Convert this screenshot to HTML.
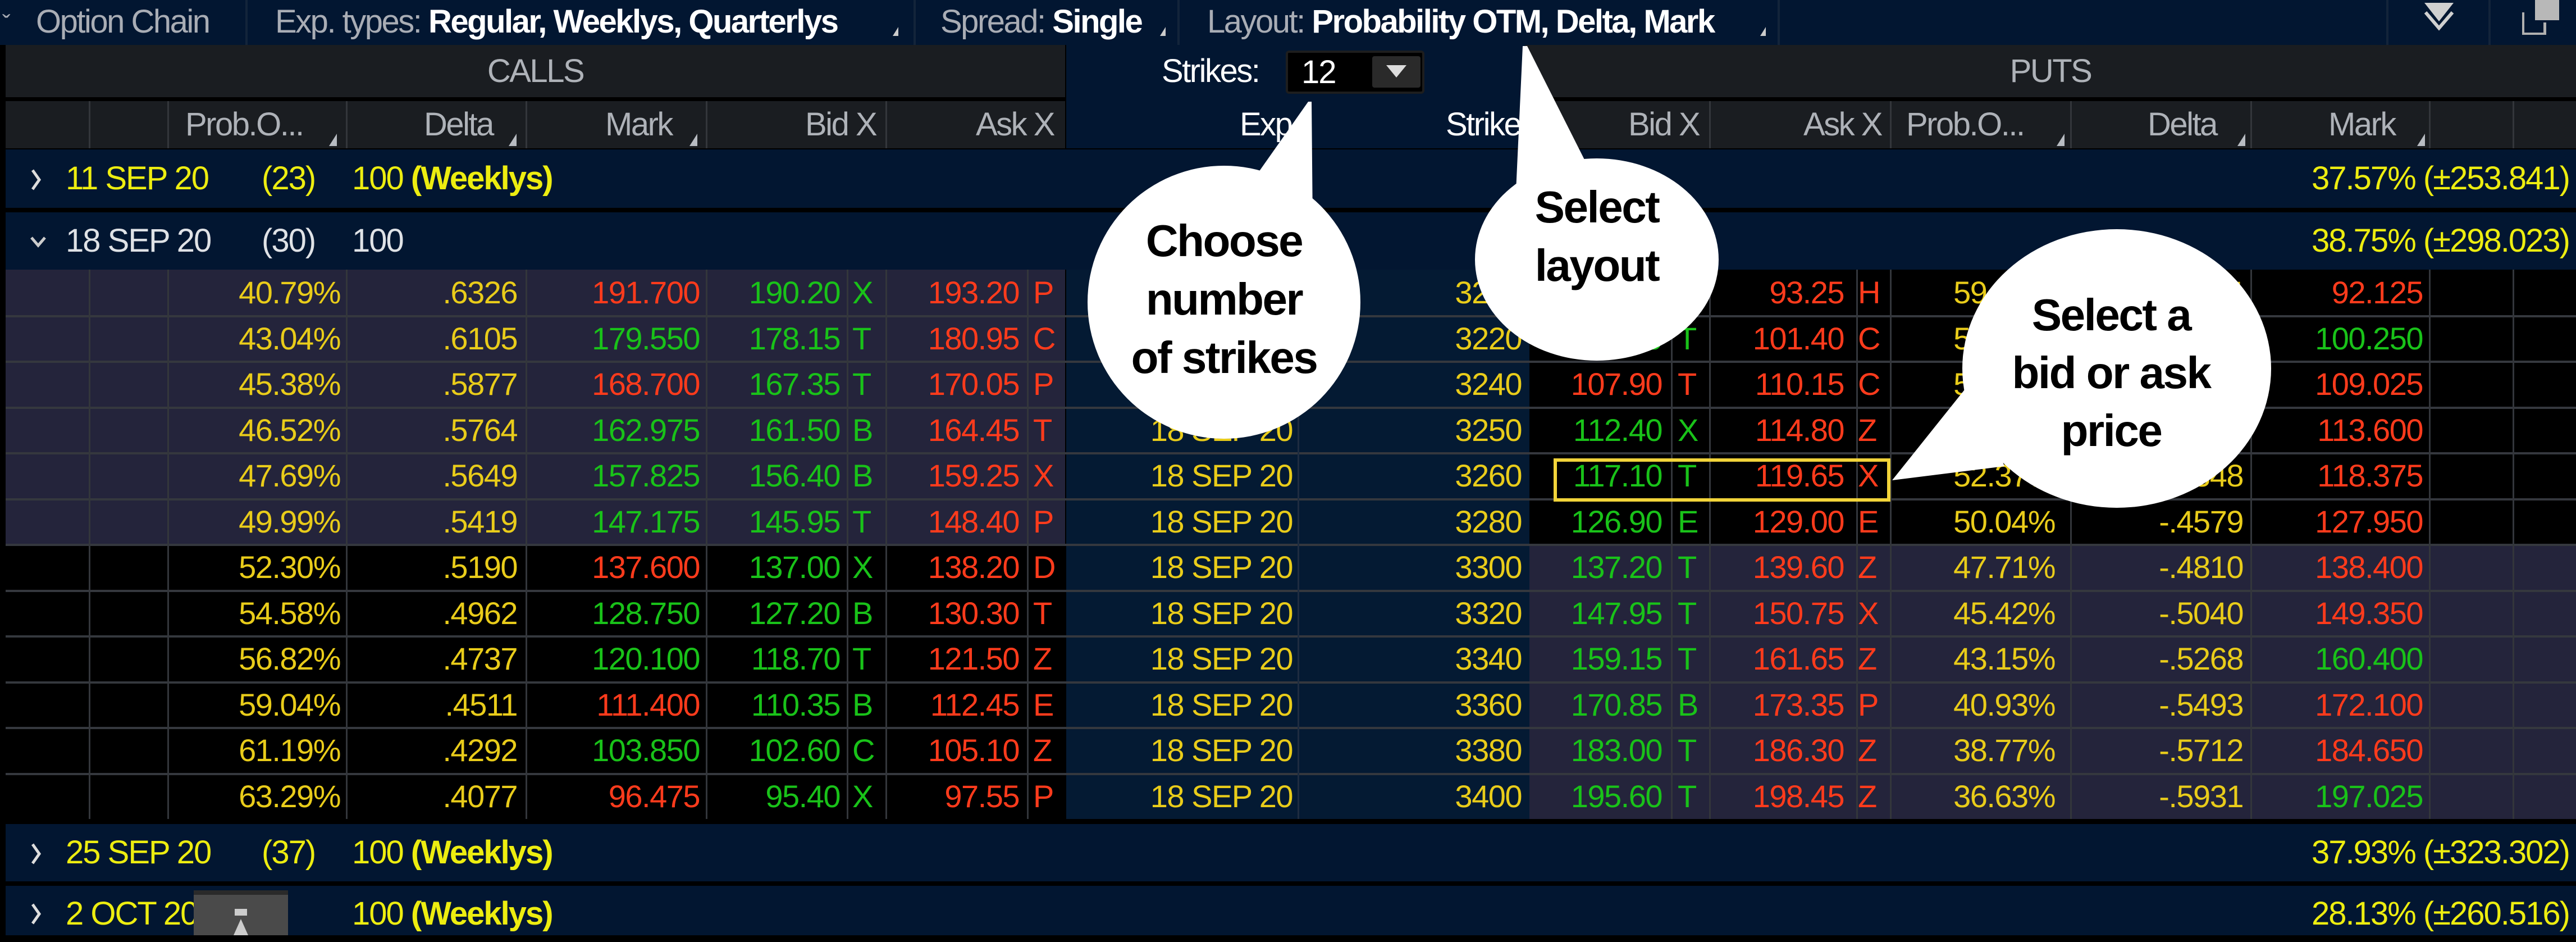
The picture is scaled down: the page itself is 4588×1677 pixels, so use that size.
<!DOCTYPE html>
<html><head><meta charset="utf-8"><style>
*{margin:0;padding:0;box-sizing:border-box}
body{width:4588px;height:1665px;background:#000;position:relative;overflow:hidden;font-family:"Liberation Sans",Arial,sans-serif}
.a{position:absolute}
.tb{left:0;top:0;width:4588px;height:80px;background:#021631}
.tt{position:absolute;top:4px;font-size:58px;line-height:70px;color:#a9adb5;white-space:nowrap;letter-spacing:-2.5px}
.tt b{color:#fff}
.sep{position:absolute;top:0;width:4px;height:80px;background:#13243a}
.hdr{background:#1a1d21;color:#aeb2b8;font-size:58px;letter-spacing:-2.5px}
.hl{position:absolute;top:0;height:84px;line-height:84px;white-space:nowrap}
.vl{position:absolute;width:3px;background:#33363b}
.exp{position:absolute;left:10px;width:4578px;background:#021631}
.ex{position:absolute;font-size:58px;letter-spacing:-2px;color:#eded10;white-space:nowrap}
.row{position:absolute;left:10px;width:4578px;height:81px;font-size:56px;letter-spacing:-1.5px;line-height:81px}
.row span{position:absolute;top:0;white-space:nowrap}
.r{text-align:right}
.y{color:#e9cc1a}.rd{color:#ff3b1c}.g{color:#19c219}.w{color:#fff}
.tri{position:absolute;width:0;height:0;border-left:14px solid transparent;border-bottom:22px solid #b8bcc2}
</style></head><body>
<!-- toolbar -->
<div class="a tb"></div>
<div class="tt" style="left:4px;font-size:44px;top:8px">&#711;</div>
<div class="tt" style="left:64px">Option Chain</div>
<div class="sep" style="left:437px"></div>
<div class="tt" style="left:490px">Exp. types: <b>Regular, Weeklys, Quarterlys</b></div>
<div class="tri" style="left:1590px;top:48px;border-bottom-color:#ccc;border-left-width:10px;border-bottom-width:16px"></div>
<div class="sep" style="left:1627px"></div>
<div class="tt" style="left:1675px">Spread: <b>Single</b></div>
<div class="tri" style="left:2066px;top:48px;border-bottom-color:#ccc;border-left-width:10px;border-bottom-width:16px"></div>
<div class="sep" style="left:2097px"></div>
<div class="tt" style="left:2150px">Layout: <b>Probability OTM, Delta, Mark</b></div>
<div class="tri" style="left:3135px;top:48px;border-bottom-color:#ccc;border-left-width:10px;border-bottom-width:16px"></div>
<div class="sep" style="left:3166px"></div>
<div class="sep" style="left:4250px"></div>
<div class="sep" style="left:4432px"></div>
<svg class="a" style="left:4310px;top:0" width="70" height="60"><polygon points="8,5 60,5 34,38" fill="#d0d0d0"/><polyline points="10,22 34,50 58,22" fill="none" stroke="#d0d0d0" stroke-width="6"/></svg>
<div class="a" style="left:4515px;top:0;width:43px;height:36px;background:#b8b8b8"></div>
<div class="a" style="left:4492px;top:22px;width:43px;height:40px;border:4px solid #b0b0b0;border-top:none;border-right:none"></div>
<div class="a" style="left:4530px;top:40px;width:5px;height:22px;background:#b0b0b0"></div>

<!-- CALLS / PUTS header -->
<div class="a hdr" style="left:10px;top:80px;width:1887px;height:93px;text-align:center;line-height:93px">CALLS</div>
<div class="a" style="left:1899px;top:80px;width:817px;height:184px;background:#021631"></div>
<div class="a hdr" style="left:2716px;top:80px;width:1872px;height:93px;text-align:center;line-height:93px">PUTS</div>
<div class="a" style="left:2069px;top:92px;font-size:58px;color:#fff;letter-spacing:-2.5px;line-height:70px">Strikes:</div>
<div class="a" style="left:2290px;top:90px;width:247px;height:77px;background:#000;border:4px solid #1e1e1e;border-radius:6px"></div>
<div class="a" style="left:2318px;top:92px;font-size:58px;color:#fff;line-height:74px;letter-spacing:-2px">12</div>
<div class="a" style="left:2444px;top:100px;width:86px;height:56px;background:#2a2a2a;border-radius:4px"></div>
<svg class="a" style="left:2465px;top:112px" width="44" height="30"><polygon points="4,4 40,4 22,26" fill="#ddd"/></svg>

<!-- column headers -->
<div class="a hdr" style="left:10px;top:180px;width:1887px;height:84px">
<span class="hl" style="left:320px">Prob.O...</span>
<span class="hl" style="left:745px">Delta</span>
<span class="hl" style="left:1068px">Mark</span>
<span class="hl" style="left:1424px">Bid X</span>
<span class="hl" style="left:1728px">Ask X</span>
</div>
<div class="tri" style="left:586px;top:238px"></div>
<div class="tri" style="left:906px;top:238px"></div>
<div class="tri" style="left:1228px;top:238px"></div>
<div class="a" style="left:2208px;top:180px;font-size:58px;color:#fff;line-height:84px;letter-spacing:-2.5px">Exp</div>
<div class="a" style="left:2575px;top:180px;font-size:58px;color:#fff;line-height:84px;letter-spacing:-2.5px">Strike</div>
<div class="a hdr" style="left:2716px;top:180px;width:1872px;height:84px">
<span class="hl" style="left:184px">Bid X</span>
<span class="hl" style="left:496px">Ask X</span>
<span class="hl" style="left:679px">Prob.O...</span>
<span class="hl" style="left:1109px">Delta</span>
<span class="hl" style="left:1431px">Mark</span>
</div>
<div class="tri" style="left:3663px;top:238px"></div>
<div class="tri" style="left:3985px;top:238px"></div>
<div class="tri" style="left:4305px;top:238px"></div>
<!-- header grid -->
<div class="vl" style="left:158px;top:180px;height:84px"></div>
<div class="vl" style="left:298px;top:180px;height:84px"></div>
<div class="vl" style="left:616px;top:180px;height:84px"></div>
<div class="vl" style="left:936px;top:180px;height:84px"></div>
<div class="vl" style="left:1257px;top:180px;height:84px"></div>
<div class="vl" style="left:1577px;top:180px;height:84px"></div>
<div class="vl" style="left:3044px;top:180px;height:84px"></div>
<div class="vl" style="left:3366px;top:180px;height:84px"></div>
<div class="vl" style="left:3687px;top:180px;height:84px"></div>
<div class="vl" style="left:4008px;top:180px;height:84px"></div>
<div class="vl" style="left:4326px;top:180px;height:84px"></div>
<div class="vl" style="left:4475px;top:180px;height:84px"></div>

<!-- expiry rows -->
<div class="exp" style="top:266px;height:104px"></div>
<div class="exp" style="top:378px;height:102px"></div>
<div class="exp" style="top:1467px;height:102px"></div>
<div class="exp" style="top:1577px;height:88px"></div>
<svg class="a" style="left:50px;top:295px" width="30" height="50"><polyline points="8,8 20,25 8,42" fill="none" stroke="#ddd" stroke-width="5"/></svg>
<div class="ex" style="left:117px;top:266px;line-height:104px">11 SEP 20</div>
<div class="ex" style="left:466px;top:266px;line-height:104px">(23)</div>
<div class="ex" style="left:627px;top:266px;line-height:104px">100 <b>(Weeklys)</b></div>
<div class="ex" style="right:12px;top:266px;line-height:104px">37.57% (±253.841)</div>
<svg class="a" style="left:50px;top:415px" width="40" height="30"><polyline points="6,8 18,22 30,8" fill="none" stroke="#ccc" stroke-width="5"/></svg>
<div class="ex" style="left:117px;top:378px;line-height:102px;color:#dfe2e6">18 SEP 20</div>
<div class="ex" style="left:466px;top:378px;line-height:102px;color:#dfe2e6">(30)</div>
<div class="ex" style="left:627px;top:378px;line-height:102px;color:#dfe2e6">100</div>
<div class="ex" style="right:12px;top:378px;line-height:102px">38.75% (±298.023)</div>
<svg class="a" style="left:50px;top:1495px" width="30" height="50"><polyline points="8,8 20,25 8,42" fill="none" stroke="#ddd" stroke-width="5"/></svg>
<div class="ex" style="left:117px;top:1467px;line-height:102px">25 SEP 20</div>
<div class="ex" style="left:466px;top:1467px;line-height:102px">(37)</div>
<div class="ex" style="left:627px;top:1467px;line-height:102px">100 <b>(Weeklys)</b></div>
<div class="ex" style="right:12px;top:1467px;line-height:102px">37.93% (±323.302)</div>
<svg class="a" style="left:50px;top:1602px" width="30" height="50"><polyline points="8,8 20,25 8,42" fill="none" stroke="#ddd" stroke-width="5"/></svg>
<div class="ex" style="left:117px;top:1577px;line-height:100px">2 OCT 20 &nbsp;(34)</div>
<div class="ex" style="left:627px;top:1577px;line-height:100px">100 <b>(Weeklys)</b></div>
<div class="ex" style="right:12px;top:1577px;line-height:100px">28.13% (±260.516)</div>
<div class="a" style="left:345px;top:1585px;width:168px;height:80px;background:#4a4a4a;border-top:8px solid #2a2a2a"></div>
<div class="a" style="left:418px;top:1618px;width:22px;height:12px;background:#ccc"></div>
<svg class="a" style="left:414px;top:1636px" width="30" height="30"><polygon points="15,0 28,29 2,29" fill="#ccc"/></svg>

<!-- data rows backgrounds -->
<div class="a" style="left:10px;top:480px;width:1887px;height:489px;background:#24243b"></div>
<div class="a" style="left:1899px;top:480px;width:825px;height:978px;background:#041a33"></div>
<div class="a" style="left:2724px;top:969px;width:1864px;height:489px;background:#24243b"></div>
<!-- row separators -->
<div class="a" style="left:10px;top:561px;width:4578px;height:4px;background:#35383e"></div>
<div class="a" style="left:10px;top:642px;width:4578px;height:4px;background:#35383e"></div>
<div class="a" style="left:10px;top:724px;width:4578px;height:4px;background:#35383e"></div>
<div class="a" style="left:10px;top:805px;width:4578px;height:4px;background:#35383e"></div>
<div class="a" style="left:10px;top:887px;width:4578px;height:4px;background:#35383e"></div>
<div class="a" style="left:10px;top:968px;width:4578px;height:4px;background:#35383e"></div>
<div class="a" style="left:10px;top:1050px;width:4578px;height:4px;background:#35383e"></div>
<div class="a" style="left:10px;top:1131px;width:4578px;height:4px;background:#35383e"></div>
<div class="a" style="left:10px;top:1213px;width:4578px;height:4px;background:#35383e"></div>
<div class="a" style="left:10px;top:1294px;width:4578px;height:4px;background:#35383e"></div>
<div class="a" style="left:10px;top:1376px;width:4578px;height:4px;background:#35383e"></div>
<!-- grid lines -->
<div class="vl" style="left:158px;top:480px;height:978px"></div>
<div class="vl" style="left:298px;top:480px;height:978px"></div>
<div class="vl" style="left:616px;top:480px;height:978px"></div>
<div class="vl" style="left:936px;top:480px;height:978px"></div>
<div class="vl" style="left:1257px;top:480px;height:978px"></div>
<div class="vl" style="left:1508px;top:480px;height:978px"></div>
<div class="vl" style="left:1577px;top:480px;height:978px"></div>
<div class="vl" style="left:1829px;top:480px;height:978px"></div>
<div class="vl" style="left:2311px;top:480px;height:978px;background:#1e2c40"></div>
<div class="vl" style="left:2976px;top:480px;height:978px"></div>
<div class="vl" style="left:3044px;top:480px;height:978px"></div>
<div class="vl" style="left:3306px;top:480px;height:978px"></div>
<div class="vl" style="left:3366px;top:480px;height:978px"></div>
<div class="vl" style="left:3687px;top:480px;height:978px"></div>
<div class="vl" style="left:4008px;top:480px;height:978px"></div>
<div class="vl" style="left:4326px;top:480px;height:978px"></div>
<div class="vl" style="left:4475px;top:480px;height:978px"></div>

<!-- data rows -->
<div class="row" style="top:480px"><span class="r y" style="left:290px;width:306px">40.79%</span><span class="r y" style="left:610px;width:301px">.6326</span><span class="r rd" style="left:930px;width:306px">191.700</span><span class="r g" style="left:1250px;width:236px">190.20</span><span class="g" style="left:1508px">X</span><span class="r rd" style="left:1570px;width:235px">193.20</span><span class="rd" style="left:1830px">P</span><span class="r y" style="left:1890px;width:402px">18 SEP 20</span><span class="r y" style="left:2310px;width:390px">3200</span><span class="r g" style="left:2720px;width:230px">90.95</span><span class="g" style="left:2978px">X</span><span class="r rd" style="left:3040px;width:234px">93.25</span><span class="rd" style="left:3299px">H</span><span class="r y" style="left:3400px;width:250px">59.21%</span><span class="r y" style="left:3700px;width:285px">-.3654</span><span class="r rd" style="left:4010px;width:295px">92.125</span></div>
<div class="row" style="top:562px"><span class="r y" style="left:290px;width:306px">43.04%</span><span class="r y" style="left:610px;width:301px">.6105</span><span class="r g" style="left:930px;width:306px">179.550</span><span class="r g" style="left:1250px;width:236px">178.15</span><span class="g" style="left:1508px">T</span><span class="r rd" style="left:1570px;width:235px">180.95</span><span class="rd" style="left:1830px">C</span><span class="r y" style="left:1890px;width:402px">18 SEP 20</span><span class="r y" style="left:2310px;width:390px">3220</span><span class="r g" style="left:2720px;width:230px">98.80</span><span class="g" style="left:2978px">T</span><span class="r rd" style="left:3040px;width:234px">101.40</span><span class="rd" style="left:3299px">C</span><span class="r y" style="left:3400px;width:250px">57.02%</span><span class="r y" style="left:3700px;width:285px">-.3871</span><span class="r g" style="left:4010px;width:295px">100.250</span></div>
<div class="row" style="top:643px"><span class="r y" style="left:290px;width:306px">45.38%</span><span class="r y" style="left:610px;width:301px">.5877</span><span class="r rd" style="left:930px;width:306px">168.700</span><span class="r g" style="left:1250px;width:236px">167.35</span><span class="g" style="left:1508px">T</span><span class="r rd" style="left:1570px;width:235px">170.05</span><span class="rd" style="left:1830px">P</span><span class="r y" style="left:1890px;width:402px">18 SEP 20</span><span class="r y" style="left:2310px;width:390px">3240</span><span class="r rd" style="left:2720px;width:230px">107.90</span><span class="rd" style="left:2978px">T</span><span class="r rd" style="left:3040px;width:234px">110.15</span><span class="rd" style="left:3299px">C</span><span class="r y" style="left:3400px;width:250px">54.81%</span><span class="r y" style="left:3700px;width:285px">-.4098</span><span class="r rd" style="left:4010px;width:295px">109.025</span></div>
<div class="row" style="top:725px"><span class="r y" style="left:290px;width:306px">46.52%</span><span class="r y" style="left:610px;width:301px">.5764</span><span class="r g" style="left:930px;width:306px">162.975</span><span class="r g" style="left:1250px;width:236px">161.50</span><span class="g" style="left:1508px">B</span><span class="r rd" style="left:1570px;width:235px">164.45</span><span class="rd" style="left:1830px">T</span><span class="r y" style="left:1890px;width:402px">18 SEP 20</span><span class="r y" style="left:2310px;width:390px">3250</span><span class="r g" style="left:2720px;width:230px">112.40</span><span class="g" style="left:2978px">X</span><span class="r rd" style="left:3040px;width:234px">114.80</span><span class="rd" style="left:3299px">Z</span><span class="r y" style="left:3400px;width:250px">53.65%</span><span class="r y" style="left:3700px;width:285px">-.4213</span><span class="r rd" style="left:4010px;width:295px">113.600</span></div>
<div class="row" style="top:806px"><span class="r y" style="left:290px;width:306px">47.69%</span><span class="r y" style="left:610px;width:301px">.5649</span><span class="r g" style="left:930px;width:306px">157.825</span><span class="r g" style="left:1250px;width:236px">156.40</span><span class="g" style="left:1508px">B</span><span class="r rd" style="left:1570px;width:235px">159.25</span><span class="rd" style="left:1830px">X</span><span class="r y" style="left:1890px;width:402px">18 SEP 20</span><span class="r y" style="left:2310px;width:390px">3260</span><span class="r g" style="left:2720px;width:230px">117.10</span><span class="g" style="left:2978px">T</span><span class="r rd" style="left:3040px;width:234px">119.65</span><span class="rd" style="left:3299px">X</span><span class="r y" style="left:3400px;width:250px">52.37%</span><span class="r y" style="left:3700px;width:285px">-.4348</span><span class="r rd" style="left:4010px;width:295px">118.375</span></div>
<div class="row" style="top:888px"><span class="r y" style="left:290px;width:306px">49.99%</span><span class="r y" style="left:610px;width:301px">.5419</span><span class="r g" style="left:930px;width:306px">147.175</span><span class="r g" style="left:1250px;width:236px">145.95</span><span class="g" style="left:1508px">T</span><span class="r rd" style="left:1570px;width:235px">148.40</span><span class="rd" style="left:1830px">P</span><span class="r y" style="left:1890px;width:402px">18 SEP 20</span><span class="r y" style="left:2310px;width:390px">3280</span><span class="r g" style="left:2720px;width:230px">126.90</span><span class="g" style="left:2978px">E</span><span class="r rd" style="left:3040px;width:234px">129.00</span><span class="rd" style="left:3299px">E</span><span class="r y" style="left:3400px;width:250px">50.04%</span><span class="r y" style="left:3700px;width:285px">-.4579</span><span class="r rd" style="left:4010px;width:295px">127.950</span></div>
<div class="row" style="top:969px"><span class="r y" style="left:290px;width:306px">52.30%</span><span class="r y" style="left:610px;width:301px">.5190</span><span class="r rd" style="left:930px;width:306px">137.600</span><span class="r g" style="left:1250px;width:236px">137.00</span><span class="g" style="left:1508px">X</span><span class="r rd" style="left:1570px;width:235px">138.20</span><span class="rd" style="left:1830px">D</span><span class="r y" style="left:1890px;width:402px">18 SEP 20</span><span class="r y" style="left:2310px;width:390px">3300</span><span class="r g" style="left:2720px;width:230px">137.20</span><span class="g" style="left:2978px">T</span><span class="r rd" style="left:3040px;width:234px">139.60</span><span class="rd" style="left:3299px">Z</span><span class="r y" style="left:3400px;width:250px">47.71%</span><span class="r y" style="left:3700px;width:285px">-.4810</span><span class="r rd" style="left:4010px;width:295px">138.400</span></div>
<div class="row" style="top:1051px"><span class="r y" style="left:290px;width:306px">54.58%</span><span class="r y" style="left:610px;width:301px">.4962</span><span class="r g" style="left:930px;width:306px">128.750</span><span class="r g" style="left:1250px;width:236px">127.20</span><span class="g" style="left:1508px">B</span><span class="r rd" style="left:1570px;width:235px">130.30</span><span class="rd" style="left:1830px">T</span><span class="r y" style="left:1890px;width:402px">18 SEP 20</span><span class="r y" style="left:2310px;width:390px">3320</span><span class="r g" style="left:2720px;width:230px">147.95</span><span class="g" style="left:2978px">T</span><span class="r rd" style="left:3040px;width:234px">150.75</span><span class="rd" style="left:3299px">X</span><span class="r y" style="left:3400px;width:250px">45.42%</span><span class="r y" style="left:3700px;width:285px">-.5040</span><span class="r rd" style="left:4010px;width:295px">149.350</span></div>
<div class="row" style="top:1132px"><span class="r y" style="left:290px;width:306px">56.82%</span><span class="r y" style="left:610px;width:301px">.4737</span><span class="r g" style="left:930px;width:306px">120.100</span><span class="r g" style="left:1250px;width:236px">118.70</span><span class="g" style="left:1508px">T</span><span class="r rd" style="left:1570px;width:235px">121.50</span><span class="rd" style="left:1830px">Z</span><span class="r y" style="left:1890px;width:402px">18 SEP 20</span><span class="r y" style="left:2310px;width:390px">3340</span><span class="r g" style="left:2720px;width:230px">159.15</span><span class="g" style="left:2978px">T</span><span class="r rd" style="left:3040px;width:234px">161.65</span><span class="rd" style="left:3299px">Z</span><span class="r y" style="left:3400px;width:250px">43.15%</span><span class="r y" style="left:3700px;width:285px">-.5268</span><span class="r g" style="left:4010px;width:295px">160.400</span></div>
<div class="row" style="top:1214px"><span class="r y" style="left:290px;width:306px">59.04%</span><span class="r y" style="left:610px;width:301px">.4511</span><span class="r rd" style="left:930px;width:306px">111.400</span><span class="r g" style="left:1250px;width:236px">110.35</span><span class="g" style="left:1508px">B</span><span class="r rd" style="left:1570px;width:235px">112.45</span><span class="rd" style="left:1830px">E</span><span class="r y" style="left:1890px;width:402px">18 SEP 20</span><span class="r y" style="left:2310px;width:390px">3360</span><span class="r g" style="left:2720px;width:230px">170.85</span><span class="g" style="left:2978px">B</span><span class="r rd" style="left:3040px;width:234px">173.35</span><span class="rd" style="left:3299px">P</span><span class="r y" style="left:3400px;width:250px">40.93%</span><span class="r y" style="left:3700px;width:285px">-.5493</span><span class="r rd" style="left:4010px;width:295px">172.100</span></div>
<div class="row" style="top:1295px"><span class="r y" style="left:290px;width:306px">61.19%</span><span class="r y" style="left:610px;width:301px">.4292</span><span class="r g" style="left:930px;width:306px">103.850</span><span class="r g" style="left:1250px;width:236px">102.60</span><span class="g" style="left:1508px">C</span><span class="r rd" style="left:1570px;width:235px">105.10</span><span class="rd" style="left:1830px">Z</span><span class="r y" style="left:1890px;width:402px">18 SEP 20</span><span class="r y" style="left:2310px;width:390px">3380</span><span class="r g" style="left:2720px;width:230px">183.00</span><span class="g" style="left:2978px">T</span><span class="r rd" style="left:3040px;width:234px">186.30</span><span class="rd" style="left:3299px">Z</span><span class="r y" style="left:3400px;width:250px">38.77%</span><span class="r y" style="left:3700px;width:285px">-.5712</span><span class="r rd" style="left:4010px;width:295px">184.650</span></div>
<div class="row" style="top:1377px"><span class="r y" style="left:290px;width:306px">63.29%</span><span class="r y" style="left:610px;width:301px">.4077</span><span class="r rd" style="left:930px;width:306px">96.475</span><span class="r g" style="left:1250px;width:236px">95.40</span><span class="g" style="left:1508px">X</span><span class="r rd" style="left:1570px;width:235px">97.55</span><span class="rd" style="left:1830px">P</span><span class="r y" style="left:1890px;width:402px">18 SEP 20</span><span class="r y" style="left:2310px;width:390px">3400</span><span class="r g" style="left:2720px;width:230px">195.60</span><span class="g" style="left:2978px">T</span><span class="r rd" style="left:3040px;width:234px">198.45</span><span class="rd" style="left:3299px">Z</span><span class="r y" style="left:3400px;width:250px">36.63%</span><span class="r y" style="left:3700px;width:285px">-.5931</span><span class="r g" style="left:4010px;width:295px">197.025</span></div>

<!-- highlight box -->
<div class="a" style="left:2767px;top:816px;width:600px;height:77px;border:6px solid #f2d43a"></div>

<!-- bubbles -->
<svg class="a" style="left:0;top:0" width="4588" height="1665">
<g fill="#fff">
<ellipse cx="2180" cy="538" rx="243" ry="243"/>
<polygon points="2225,330 2330,181 2336,181 2338,400"/>
<ellipse cx="2844" cy="462" rx="217" ry="180"/>
<polygon points="2712,82 2720,82 2830,300 2700,340"/>
<ellipse cx="3770" cy="656" rx="275" ry="248"/>
<polygon points="3370,855 3510,680 3570,830"/>
</g>
</svg>
<div class="a" style="left:1930px;top:377px;width:500px;text-align:center;font-weight:bold;font-size:80px;line-height:104px;color:#000;letter-spacing:-2.5px">Choose<br>number<br>of strikes</div>
<div class="a" style="left:2594px;top:317px;width:500px;text-align:center;font-weight:bold;font-size:80px;line-height:104px;color:#000;letter-spacing:-2.5px">Select<br>layout</div>
<div class="a" style="left:3510px;top:509px;width:500px;text-align:center;font-weight:bold;font-size:80px;line-height:103px;color:#000;letter-spacing:-2.5px">Select a<br>bid or ask<br>price</div>
</body></html>
